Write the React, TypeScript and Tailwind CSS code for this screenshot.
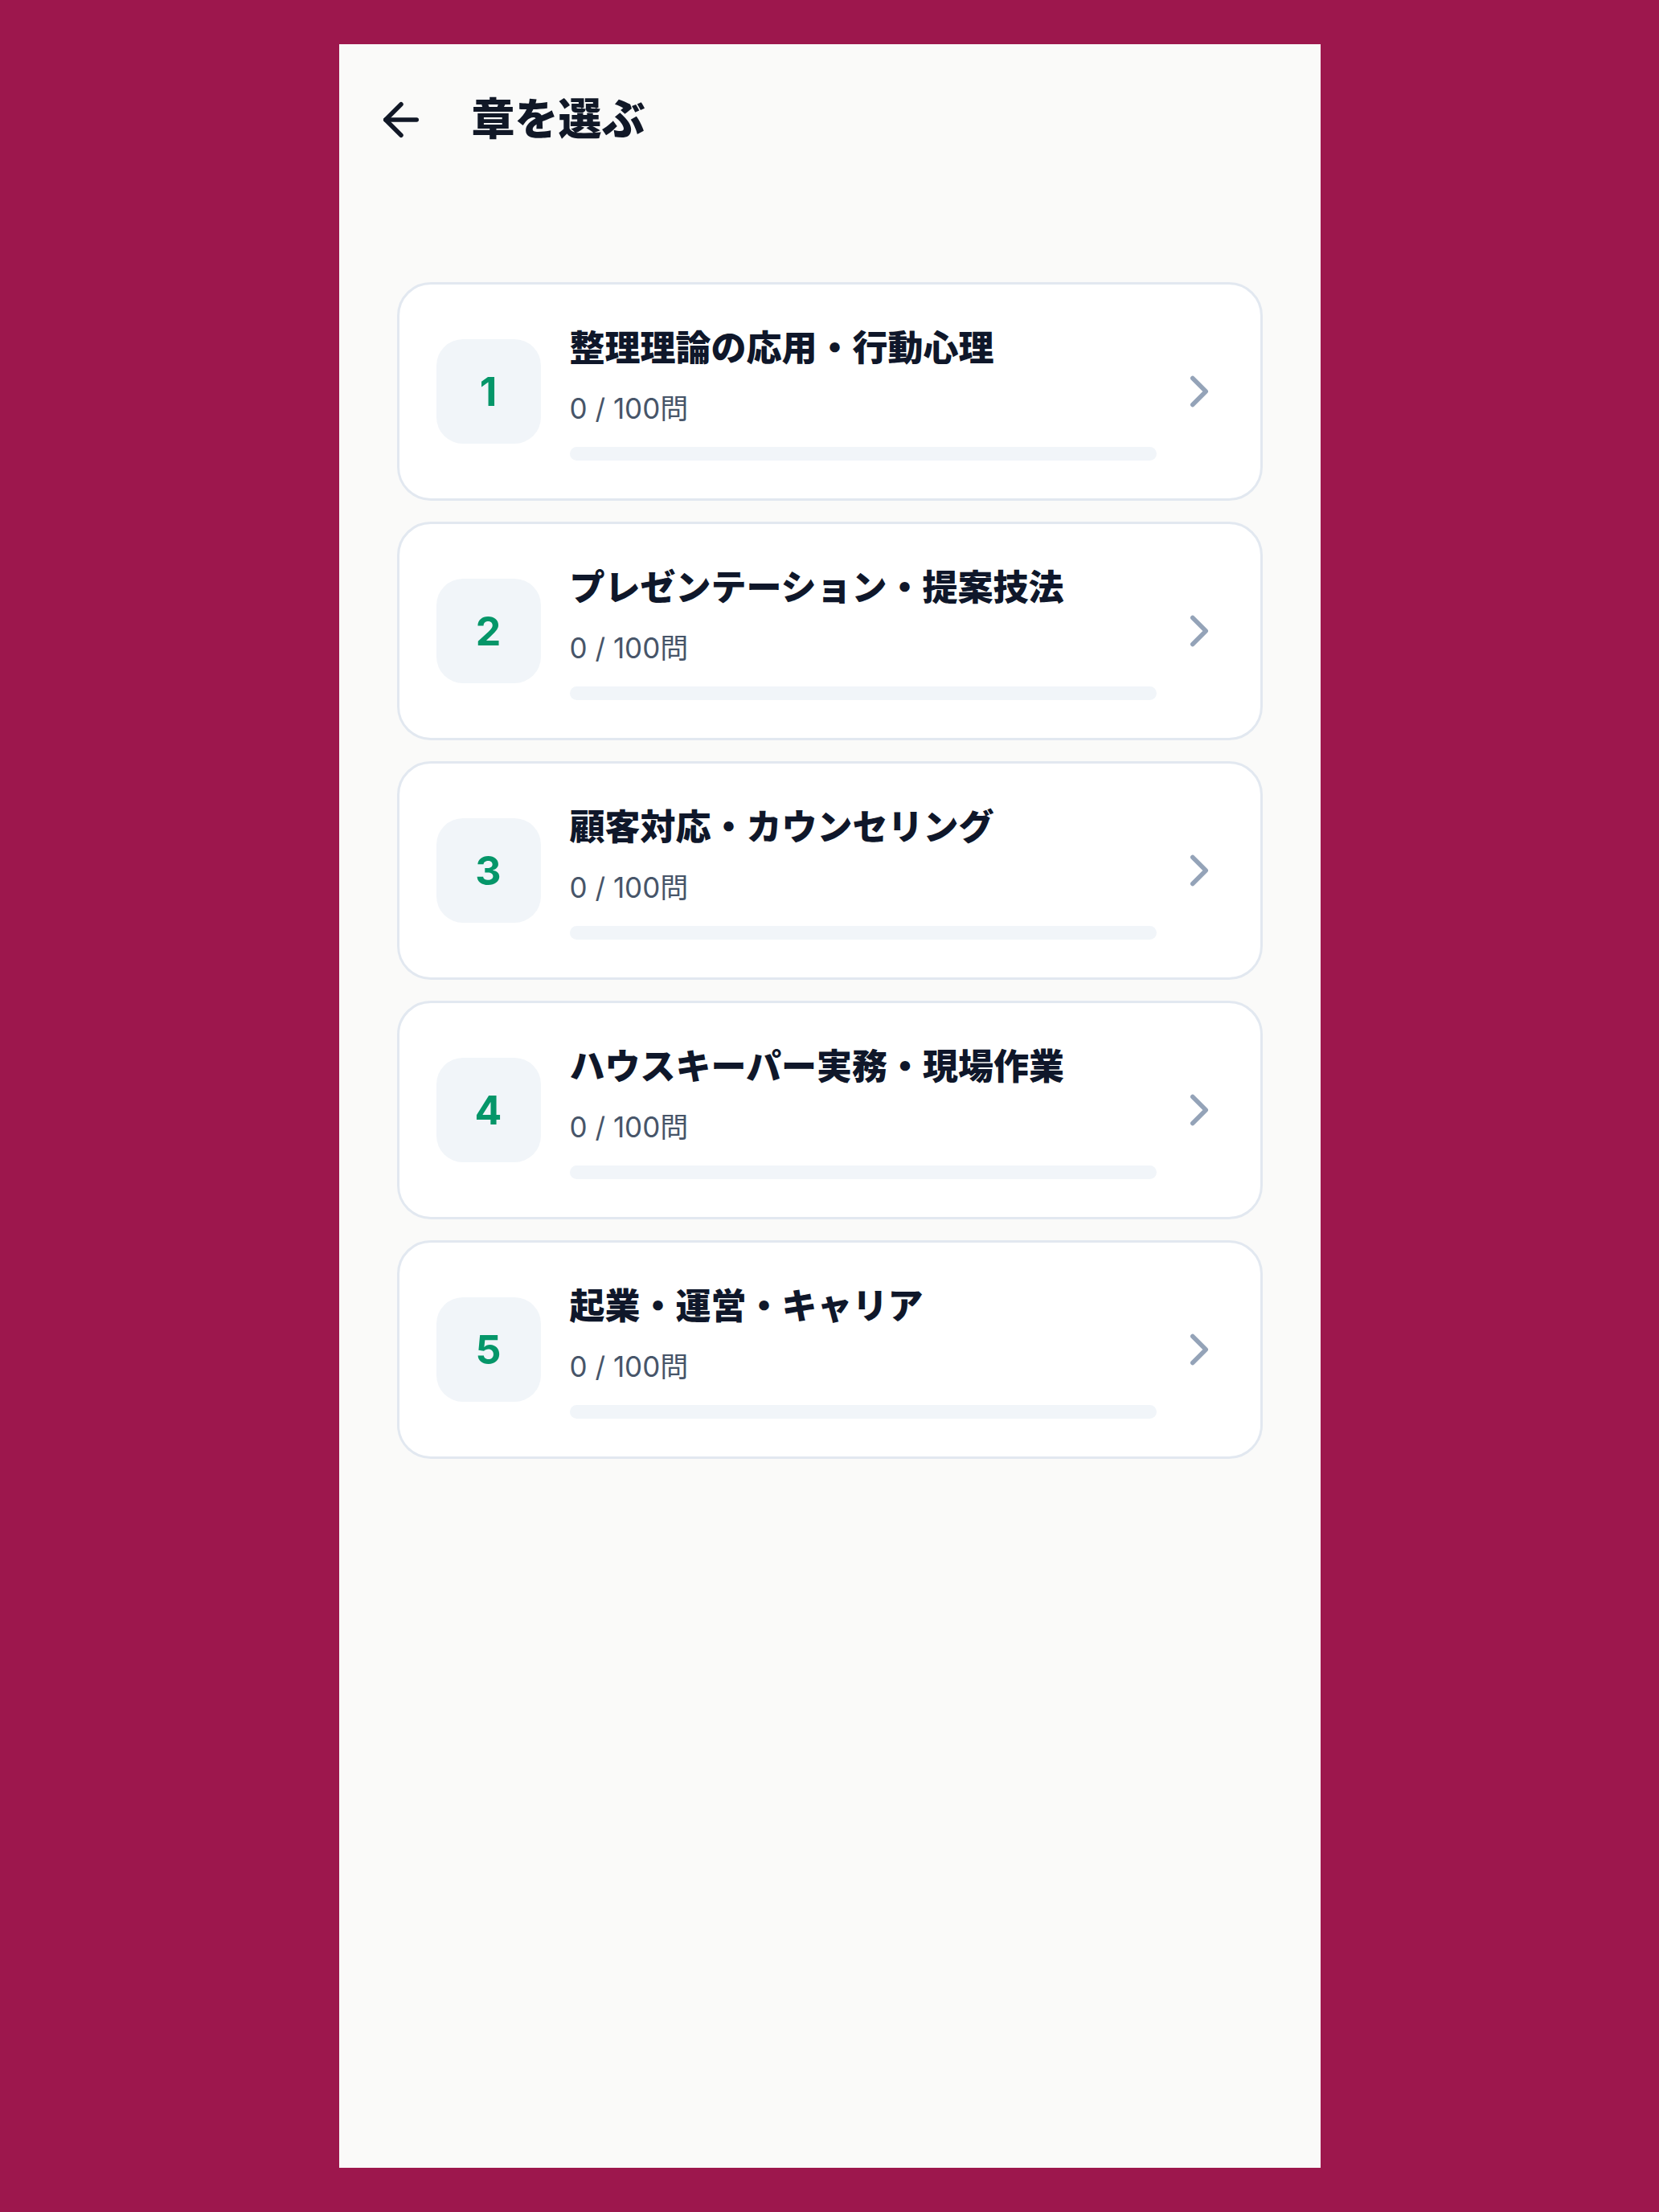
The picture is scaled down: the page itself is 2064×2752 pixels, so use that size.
import React from "react";

const chapters = [
  "整理理論の応用・行動心理",
  "プレゼンテーション・提案技法",
  "顧客対応・カウンセリング",
  "ハウスキーパー実務・現場作業",
  "起業・運営・キャリア",
];

const font = { fontFamily: 'Inter, "Noto Sans CJK JP", sans-serif' };

function ArrowLeftIcon() {
  return (
    <svg width="66" height="66" viewBox="0 0 24 24" fill="none" stroke="#111827" strokeWidth="2" strokeLinecap="round" strokeLinejoin="round">
      <path d="m12 19-7-7 7-7" />
      <path d="M19 12H5" />
    </svg>
  );
}

function ChevronRightIcon() {
  return (
    <svg width="66" height="66" viewBox="0 0 24 24" fill="none" stroke="#94a3b8" strokeWidth="2" strokeLinecap="round" strokeLinejoin="round">
      <path d="m9 18 6-6-6-6" />
    </svg>
  );
}

export default function App() {
  return (
    <div className="w-[2064px] h-[2752px] bg-[#9d174d] flex items-center justify-center" style={font}>
      <div className="w-[1221px] h-[2642px] bg-[#fafaf9] flex flex-col">
        <div className="h-[188px] flex items-center pl-[44px] shrink-0">
          <ArrowLeftIcon />
          <h1 className="ml-[55px] text-[54px] leading-[70px] font-extrabold text-[#111827]">章を選ぶ</h1>
        </div>
        <div className="mt-[108px] px-[72px] flex flex-col gap-[26px]">
          {chapters.map((title, i) => (
            <div
              key={i}
              className="h-[272px] rounded-[42px] border-[3px] border-[#e2e8f0] bg-white flex items-center pl-[46px] pr-[43px]"
            >
              <div className="w-[130px] h-[130px] rounded-[33px] bg-[#f1f5f9] flex items-center justify-center shrink-0">
                <span className="text-[50px] font-bold text-[#059669] leading-none">{i + 1}</span>
              </div>
              <div className="ml-[36px] flex-1 flex flex-col">
                <div className="text-[44px] leading-[62px] font-extrabold text-[#0f172a]">{title}</div>
                <div className="mt-[18px] text-[35px] leading-[52px] text-[#475569]">0 / 100問</div>
                <div className="mt-[22px] h-[17px] rounded-full bg-[#f1f5f9]" />
              </div>
              <div className="ml-[20px] shrink-0">
                <ChevronRightIcon />
              </div>
            </div>
          ))}
        </div>
      </div>
    </div>
  );
}
